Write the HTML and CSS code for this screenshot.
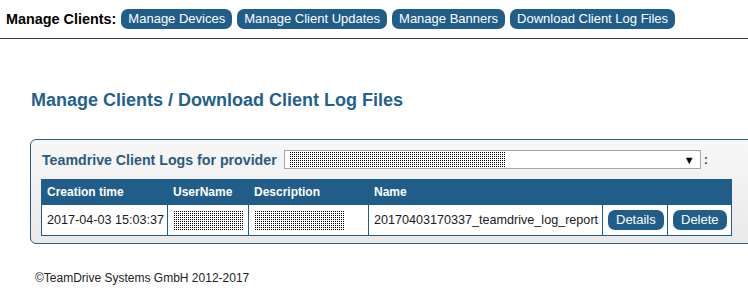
FILE: index.html
```html
<!DOCTYPE html>
<html lang="en">
<head>
    <meta charset="UTF-8">
    <title>Manage Clients</title>
    <link rel="stylesheet" href="styles.css">
</head>
<body>

    <header class="top-bar">
        <span class="top-label">Manage Clients:</span>
        <a class="nav-button" href="#">Manage Devices</a>
        <a class="nav-button" href="#">Manage Client Updates</a>
        <a class="nav-button" href="#">Manage Banners</a>
        <a class="nav-button" href="#">Download Client Log Files</a>
    </header>

    <main>
        <h1 class="page-title">Manage Clients / Download Client Log Files</h1>

        <div class="panel">
            <div class="panel-head">
                <span class="panel-label">Teamdrive Client Logs for provider</span>
                <div class="fake-select">
                    <span class="redacted select-redacted"></span>
                    <span class="select-arrow">&#9660;</span>
                </div>
                <span class="colon">:</span>
            </div>

            <table class="log-table">
                <colgroup>
                    <col class="col-time">
                    <col class="col-user">
                    <col class="col-desc">
                    <col class="col-name">
                    <col class="col-details">
                    <col class="col-delete">
                </colgroup>
                <tr>
                    <th>Creation time</th>
                    <th>UserName</th>
                    <th>Description</th>
                    <th>Name</th>
                    <th></th>
                    <th></th>
                </tr>
                <tr>
                    <td>2017-04-03 15:03:37</td>
                    <td><span class="redacted user-redacted"></span></td>
                    <td><span class="redacted desc-redacted"></span></td>
                    <td>20170403170337_teamdrive_log_report</td>
                    <td><a class="row-button" href="#">Details</a></td>
                    <td><a class="row-button" href="#">Delete</a></td>
                </tr>
            </table>
        </div>
    </main>

    <footer class="page-footer">&copy;TeamDrive Systems GmbH 2012-2017</footer>

</body>
</html>
```

FILE: styles.css
```css
html, body {
    overflow: hidden;
}

body {
    margin: 0;
    padding: 0;
    font-family: 'Liberation Sans', Arial, sans-serif;
    background: #fff;
    color: #222;
}

/* top navigation */
.top-bar {
    display: flex;
    align-items: center;
    gap: 5px;
    height: 39px;
    padding-left: 6px;
    box-sizing: border-box;
    border-bottom: 1px solid #2d3b4c;
}

.top-label {
    font-size: 14.4px;
    font-weight: bold;
    color: #000;
}

.nav-button {
    display: inline-block;
    height: 20px;
    line-height: 20px;
    padding: 0 7px;
    background-color: #205d89;
    color: #fff;
    font-size: 13px;
    text-decoration: none;
    border-radius: 7px;
}

/* main area */
main {
    padding: 0 0 0 31px;
}

.page-title {
    margin: 50px 0 0 0;
    height: 22px;
    line-height: 22px;
    font-size: 18px;
    font-weight: bold;
    color: #22608d;
}

.panel {
    width: 760px;
    margin-top: 28px;
    margin-left: -1px;
    padding: 10px 0 7px 10px;
    border: 1px solid #2a5f86;
    border-radius: 6px;
    background: linear-gradient(to bottom, #f7f7f7, #e9e9e9);
}

.panel-head {
    display: flex;
    align-items: center;
    height: 19px;
}

.panel-label {
    font-size: 14.2px;
    font-weight: bold;
    color: #2b5a7e;
    margin-left: 1px;
    margin-right: 7px;
}

.fake-select {
    display: flex;
    align-items: center;
    justify-content: space-between;
    width: 406px;
    height: 17px;
    padding: 0 5px 0 4px;
    background: #fff;
    border: 1px solid #a6a6a6;
}

.select-arrow {
    font-size: 11px;
    color: #000;
}

.colon {
    font-size: 13px;
    color: #2b5a7e;
    margin-left: 3px;
    font-weight: bold;
}

/* redacted blocks */
.redacted {
    display: inline-block;
    background-color: #fff;
    background-image: conic-gradient(#000 25%, transparent 0);
    background-size: 2px 2px;
}

.select-redacted {
    width: 216px;
    height: 15px;
}

.user-redacted {
    width: 71px;
    height: 19px;
    vertical-align: middle;
}

.desc-redacted {
    width: 90px;
    height: 19px;
    vertical-align: middle;
}

/* table */
.log-table {
    margin-top: 10px;
    border-collapse: collapse;
    table-layout: fixed;
    width: 690px;
}

.col-time { width: 126px; }
.col-user { width: 81px; }
.col-desc { width: 120px; }
.col-name { width: 234px; }
.col-details { width: 65px; }
.col-delete { width: 64px; }

.log-table th {
    height: 24px;
    padding: 0 5px;
    background-color: #205d89;
    color: #fff;
    font-size: 12px;
    font-weight: bold;
    text-align: left;
    border: 1px solid #205d89;
}

.log-table td {
    height: 30px;
    padding: 0 4px 0 5px;
    background-color: #fff;
    font-size: 12.6px;
    color: #1a1a1a;
    border: 1px solid #205d89;
    white-space: nowrap;
}

.row-button {
    display: inline-block;
    height: 20px;
    line-height: 20px;
    padding: 0 8px;
    background-color: #205d89;
    color: #fff;
    font-size: 13px;
    text-decoration: none;
    border-radius: 7px;
}

.page-footer {
    margin: 27px 0 0 35px;
    font-size: 12px;
    color: #222;
}
```
